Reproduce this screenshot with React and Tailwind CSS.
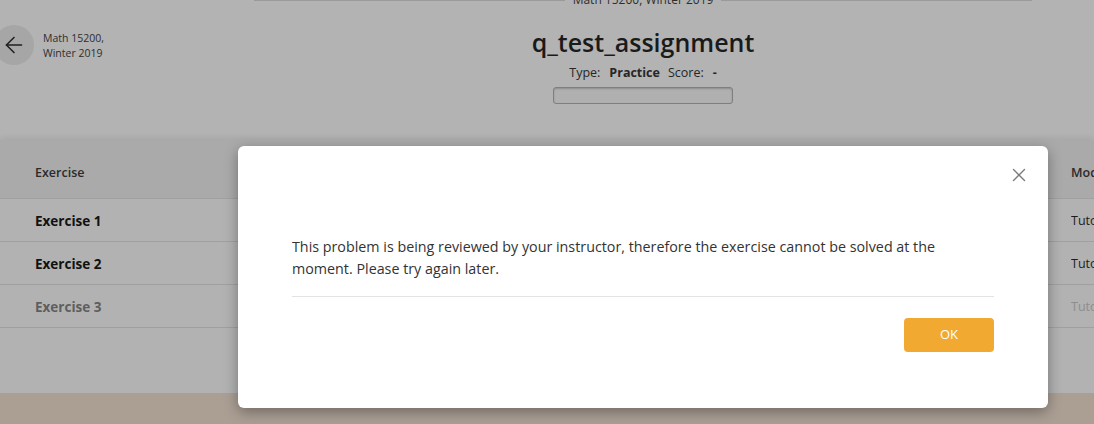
import { X, ArrowLeft } from 'lucide-react';

const rows = [
  { name: 'Exercise 1', mode: 'Tutorial', muted: false },
  { name: 'Exercise 2', mode: 'Tutorial', muted: false },
  { name: 'Exercise 3', mode: 'Tutorial', muted: true },
];

export default function App() {
  return (
    <div className="relative h-[424px] w-[1094px] overflow-hidden bg-[#b3b3b3] font-['Open_Sans',sans-serif]">
      {/* Header */}
      <div className="relative h-[140px]">
        <div className="absolute left-[-6px] top-[25px] flex items-center">
          <div className="flex h-10 w-10 items-center justify-center rounded-full bg-[#a6a6a6]">
            <ArrowLeft size={26} strokeWidth={1.4} className="text-[#1f1f1f]" />
          </div>
          <div className="ml-[9px] pt-[1px] text-[10.5px] leading-[15px] text-[#2e2e2e]">
            Math 15200,
            <br />
            Winter 2019
          </div>
        </div>

        <div className="ml-[254px] w-[778px] flex flex-col items-center">
          <div className="flex w-full items-center -mt-[8px]">
            <div className="h-px flex-1 bg-[#9a9a9a]" />
            <span className="px-2 text-[12px] leading-[16px] text-[#2e2e2e]">Math 15200, Winter 2019</span>
            <div className="h-px flex-1 bg-[#9a9a9a]" />
          </div>
          <h1 className="mt-[18px] text-[25px] leading-[32px] font-semibold text-[#1a1a1a]">q_test_assignment</h1>
          <div className="mt-[7px] flex items-center gap-[9px] text-[12.5px] leading-[16px] text-[#262626]">
            <span>Type:</span>
            <span className="font-bold">Practice</span>
            <span className="ml-[-1px]">Score:</span>
            <span className="font-bold">-</span>
          </div>
          <div className="mt-[6px] h-[17px] w-[180px] rounded-[3px] border border-[#7f7f7f] bg-[#b0b0b0] shadow-[inset_0_1px_2px_rgba(0,0,0,0.2)]" />
        </div>
      </div>

      {/* Table */}
      <div className="h-[253px] bg-[#b2b2b2] shadow-[0_-2px_6px_rgba(0,0,0,0.08)]">
        <div className="flex h-[59px] items-start justify-between border-b border-[#a0a0a0] bg-[#aaaaaa] pl-[35px] pt-[24px] text-[12.5px] font-semibold leading-[18px] text-[#2b2b2b]">
          <span>Exercise</span>
          <span className="w-[23px] overflow-hidden whitespace-nowrap">Mode</span>
        </div>
        {rows.map((r) => (
          <div
            key={r.name}
            className="flex h-[43px] items-center justify-between border-b border-[#a0a0a0] pl-[35px] pt-[2px] text-[13.5px]"
          >
            <span className={r.muted ? 'font-bold text-[#5e5e5e]' : 'font-bold text-[#111111]'}>{r.name}</span>
            <span
              className={
                r.muted
                  ? 'w-[23px] overflow-hidden whitespace-nowrap text-[12.5px] text-[#8d8d8d]'
                  : 'w-[23px] overflow-hidden whitespace-nowrap text-[12.5px] text-[#1c1c1c]'
              }
            >
              {r.mode}
            </span>
          </div>
        ))}
      </div>
      <div className="h-[31px] bg-[#ab9f94]" />

      {/* Modal */}
      <div className="absolute left-[238px] top-[146px] h-[262px] w-[810px] rounded-[6px] bg-white shadow-[0_4px_14px_rgba(0,0,0,0.35)]">
        <button className="absolute right-[18px] top-[18px] text-[#7a7a7a]">
          <X size={22} strokeWidth={1.5} />
        </button>
        <div className="px-[54px] pt-[90px]">
          <p className="text-[14.3px] leading-[22px] text-[#333333]">
            This problem is being reviewed by your instructor, therefore the exercise cannot be solved at the moment. Please try again later.
          </p>
          <div className="mt-[16px] h-px bg-[#e3e3e3]" />
          <div className="mt-[21px] flex justify-end">
            <button className="h-[34px] w-[90px] rounded-[4px] bg-[#f1a931] text-[13px] text-white">OK</button>
          </div>
        </div>
      </div>
    </div>
  );
}
